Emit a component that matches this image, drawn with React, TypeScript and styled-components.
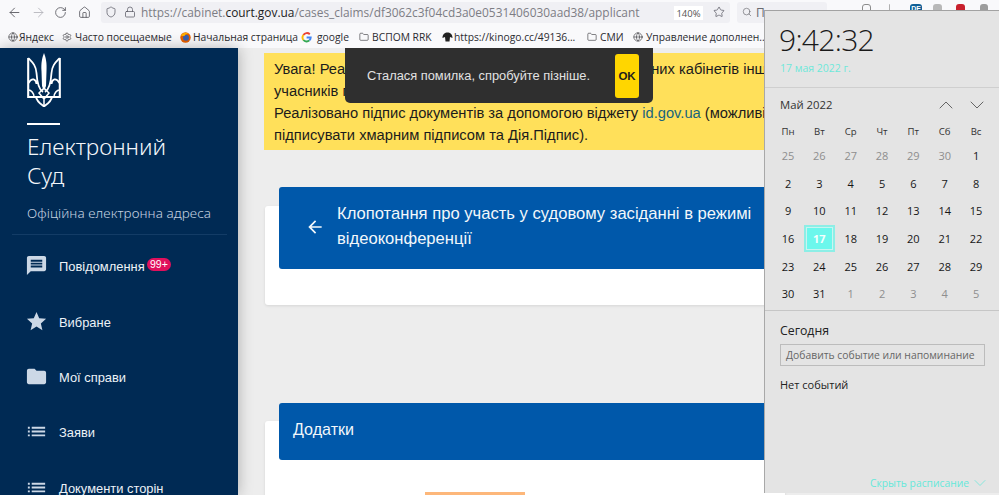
import { FunctionComponent } from 'react';
import styled, { createGlobalStyle } from 'styled-components';
import { ArrowLeft, ArrowRight, ChevronDown, ChevronUp, Folder, Globe, Home, Lock, RotateCw, Search, Settings, Shield, Star } from 'lucide-react';
import { MdArrowBack, MdFolder, MdList, MdMessage, MdStar } from 'react-icons/md';

const GlobalStyle = createGlobalStyle`
  html, body {
    margin: 0;
    padding: 0;
    overflow: hidden;
    background: #ededed;
  }
  * { box-sizing: border-box; }
`;

const Page = styled.div`
  position: relative;
  width: 999px;
  height: 495px;
  overflow: hidden;
  display: flex;
  flex-direction: column;
  font-family: "Liberation Sans", Arial, sans-serif;
`;

/* browser chrome */
const Toolbar = styled.div`
  height: 26px;
  flex: none;
  display: flex;
  align-items: center;
  padding: 0 0 2px 7px;
  background: #f9f9fb;
  color: #55555c;
`;

const NavButton = styled.span<{ $width: number; $muted?: boolean }>`
  width: ${p => p.$width}px;
  flex: none;
  display: flex;
  align-items: center;
  color: ${p => (p.$muted ? '#b4b4ba' : '#55555c')};
`;

const UrlBar = styled.div`
  width: 629px;
  height: 21px;
  flex: none;
  display: flex;
  align-items: center;
  margin: 0 7px 0 5px;
  background: #f0f0f4;
  border-radius: 3px;
`;

const UrlIcon = styled.span<{ $gap?: number }>`
  width: 19px;
  flex: none;
  display: flex;
  justify-content: center;
  margin-left: ${p => p.$gap ?? 0}px;
  color: #5b5b66;
`;

const UrlText = styled.div`
  width: 533px;
  flex: none;
  margin-left: 2px;
  font-family: "Open Sans", sans-serif;
  font-size: 11.9px;
  color: #7d7d84;
  white-space: nowrap;
  overflow: hidden;

  b {
    font-weight: 400;
    color: #1c1c22;
  }
`;

const ZoomBadge = styled.span`
  width: 29px;
  height: 14px;
  flex: none;
  margin-top: 2px;
  background: #fff;
  font-family: "Open Sans", sans-serif;
  font-size: 9.5px;
  line-height: 15px;
  text-align: center;
  color: #555;
`;

const SearchBox = styled.div`
  width: 90px;
  height: 21px;
  flex: none;
  display: flex;
  align-items: center;
  gap: 4px;
  padding-left: 5px;
  background: #f0f0f4;
  font-family: "Open Sans", sans-serif;
  font-size: 12px;
  color: #6a6a70;
  border-radius: 3px;
`;

const TrayIcon = styled.span<{ $color: string; $offset: number; $width: number; $outline?: boolean }>`
  width: ${p => p.$width}px;
  height: 16px;
  flex: none;
  margin-left: ${p => p.$offset}px;
  border-radius: 3px;
  background: ${p => (p.$outline ? 'transparent' : p.$color)};
  border: ${p => (p.$outline ? `1px solid ${p.$color}` : 'none')};
  color: #fff;
  font-size: 7px;
  font-weight: 700;
  line-height: 10px;
  text-align: center;
`;

const Bookmarks = styled.div`
  height: 22px;
  flex: none;
  display: flex;
  align-items: center;
  padding-left: 8px;
  background: #f9f9fb;
  font-family: "Open Sans", sans-serif;
  font-size: 10.3px;
  color: #2b2b30;
  white-space: nowrap;
`;

const Bookmark = styled.span<{ $width: number; $gap?: number }>`
  width: ${p => p.$width}px;
  flex: none;
  display: flex;
  align-items: center;
  gap: ${p => p.$gap ?? 2}px;
  color: #2b2b30;

  svg { flex: none; }
`;

/* page */
const Body = styled.div`
  flex: 1;
  min-height: 0;
  display: flex;
`;

const Sidebar = styled.aside`
  width: 238px;
  flex: none;
  background: #002a54;
  box-shadow: 0 0 14px rgba(0, 0, 0, 0.28);
  overflow: hidden;
  z-index: 1;
`;

const Brand = styled.div`
  margin: 0 11px 0 12px;
  padding: 5px 0 0 15px;
  height: 187px;
  border-bottom: 1px solid #133c66;
`;

const Rule = styled.div`
  width: 33px;
  height: 2px;
  margin: 12px 0 7px;
  background: #fff;
`;

const Title = styled.div`
  font-family: "Noto Sans", sans-serif;
  font-weight: 300;
  font-size: 22.6px;
  line-height: 29px;
  color: #f2f6fa;
`;

const Subtitle = styled.div`
  margin-top: 14px;
  font-family: "Noto Sans", sans-serif;
  font-weight: 300;
  font-size: 13.5px;
  letter-spacing: 0.07px;
  color: #c4d2e0;
  white-space: nowrap;
`;

const Nav = styled.nav`
  padding: 3px 0 0 25px;
`;

const NavItem = styled.div`
  height: 55.4px;
  display: flex;
  align-items: center;
  gap: 11px;
  font-size: 12.9px;
  color: #edf2f7;
  white-space: nowrap;

  svg {
    flex: none;
    color: #ccd8e6;
  }
`;

const NavLabel = styled.span`
  position: relative;
  top: 1px;
`;

const Badge = styled.span`
  position: absolute;
  left: 88px;
  top: -1px;
  height: 13px;
  padding: 0 3px;
  border-radius: 7px;
  background: #e0105c;
  color: #fff;
  font-size: 10.5px;
  line-height: 12px;
`;

const Content = styled.main`
  flex: 1;
  min-width: 0;
  overflow: hidden;
  padding: 5px 0 0 26px;
  background: #ededed;
`;

const Notice = styled.div`
  width: 520px;
  height: 97px;
  padding: 5px 0 0 10px;
  background: #ffe05a;
  font-size: 14.7px;
  line-height: 22px;
  color: #1c1c1c;
  white-space: nowrap;
  overflow: hidden;

  a {
    color: #17657e;
    text-decoration: none;
  }
`;

const Card = styled.section<{ $top: number; $height: number }>`
  width: 520px;
  height: ${p => p.$height}px;
  margin: ${p => p.$top}px 0 0 1px;
  background: #fff;
  border-radius: 3px 0 0 3px;
  box-shadow: 0 1px 3px rgba(0, 0, 0, 0.1);
`;

const CardHeader = styled.header<{ $height: number; $lift: number }>`
  height: ${p => p.$height}px;
  margin-left: 14px;
  transform: translateY(-${p => p.$lift}px);
  display: flex;
  align-items: center;
  background: #0058aa;
  border-radius: 3px 0 0 3px;
  color: #f2f7fb;
`;

const BackIcon = styled.span`
  width: 58px;
  flex: none;
  display: flex;
  justify-content: center;
  padding: 0 0 2px 14px;
`;

const HeaderTitle = styled.div`
  font-size: 16.6px;
  line-height: 25px;
  padding-bottom: 4px;
  white-space: nowrap;
`;

const PlainTitle = styled.div`
  padding: 0 0 4px 14px;
  font-size: 16.1px;
`;

const AttachButton = styled.div`
  width: 100px;
  height: 4px;
  margin: 14px 0 0 160px;
  background: #fdb77a;
`;

/* toast over the notice */
const Toast = styled.div`
  position: absolute;
  left: 345px;
  top: 48px;
  width: 308px;
  height: 55px;
  display: flex;
  align-items: center;
  justify-content: space-between;
  padding: 0 14px 0 22px;
  background: #2f2f2f;
  border-radius: 0 0 5px 5px;
  color: #e2e2e2;
  font-size: 12.85px;
  z-index: 2;
`;

const ToastButton = styled.span`
  width: 24px;
  height: 44px;
  display: flex;
  align-items: center;
  justify-content: center;
  background: #ffd600;
  border-radius: 3px;
  color: #1d1d1d;
  font-size: 11.5px;
  font-weight: 700;
`;

/* windows calendar flyout */
const Flyout = styled.div`
  position: absolute;
  left: 764px;
  top: 10px;
  width: 235px;
  height: 483px;
  background: #e4e4e4;
  border-top: 1px solid #a2a2a2;
  border-left: 1px solid #a8a8a8;
  font-family: "Open Sans", sans-serif;
  color: #111;
  z-index: 3;
`;

const ClockPanel = styled.div`
  height: 77px;
  padding: 9px 0 0 14px;
  border-bottom: 1px solid #cfcfcf;
`;

const Clock = styled.div`
  font-weight: 300;
  font-size: 30px;
  letter-spacing: -0.7px;
  line-height: 40px;
  color: #1a1a1a;
`;

const ClockDate = styled.div`
  font-size: 10.5px;
  line-height: 14px;
  margin: 1px 0 0 1px;
  color: #6ee8da;
`;

const MonthPanel = styled.div`
  height: 223px;
  border-bottom: 1px solid #c6c6c6;
`;

const MonthHead = styled.div`
  height: 33px;
  display: flex;
  align-items: center;
  padding: 0 10px 0 15px;
  font-size: 11.3px;
  color: #333;
`;

const MonthName = styled.span`
  flex: 1;
`;

const MonthArrows = styled.span`
  display: flex;
  gap: 7px;
  color: #444;
`;

const DayGrid = styled.div`
  display: grid;
  grid-template-columns: repeat(7, 31.33px);
  grid-template-rows: 21px repeat(6, 27.6px);
  padding-left: 7.4px;
`;

const WeekDay = styled.div`
  display: flex;
  align-items: center;
  justify-content: center;
  font-size: 9.6px;
  color: #333;
`;

const Day = styled.div<{ $muted?: boolean; $today?: boolean }>`
  display: flex;
  align-items: center;
  justify-content: center;
  font-size: 11px;
  color: ${p => (p.$today ? '#f4fffe' : p.$muted ? '#8e8e8e' : '#161616')};
  font-weight: ${p => (p.$today ? 700 : 400)};
  background: ${p => (p.$today ? '#6cf7ec' : 'transparent')};
  border: ${p => (p.$today ? '2px solid #8ceee6' : 'none')};
  outline: ${p => (p.$today ? '1px solid #c9f4f0' : 'none')};
  outline-offset: -3px;
`;

const Agenda = styled.div`
  padding: 12px 14px 0 15px;
`;

const AgendaTitle = styled.div`
  font-size: 12.3px;
  line-height: 16px;
  color: #222;
`;

const EventInput = styled.div`
  height: 22px;
  margin-top: 5px;
  padding-left: 5px;
  border: 1px solid #bcbcbc;
  font-size: 10.35px;
  line-height: 20px;
  color: #666;
  white-space: nowrap;
`;

const NoEvents = styled.div`
  margin-top: 11px;
  font-size: 11px;
  line-height: 15px;
  color: #222;
`;

const HideAgenda = styled.div`
  position: absolute;
  right: 9px;
  bottom: 0;
  display: flex;
  align-items: center;
  gap: 1px;
  font-size: 10.3px;
  color: #66e8da;
`;

const bookmarkIconProps = { size: 10, strokeWidth: 1.4 };

const Trident: FunctionComponent = () => (
  <svg width="34" height="54" viewBox="0 0 34 54" fill="none" stroke="#fff" strokeWidth="2.1">
    <path d="M1.2 5 V44 H32.8 V5" />
    <path d="M1.2 5 C5 9 9 12 9.5 20 C10 28 11 36 16 39 M1.5 30 C5 24 9 26 9.5 31 M32.8 5 C29 9 25 12 24.5 20 C24 28 23 36 18 39 M32.5 30 C29 24 25 26 24.5 31" strokeWidth="1.8" />
    <path d="M7 44 C7 40 4 37 1.5 37 M27 44 C27 40 30 37 32.5 37" strokeWidth="1.6" />
    <path d="M17 0 C19 5 20 10 19.5 18 L19 33 L17 38 L15 33 L14.5 18 C14 10 15 5 17 0 Z" fill="#fff" stroke="none" />
    <path d="M9 44 C10 49 14 51 17 53.5 C20 51 24 49 25 44" strokeWidth="1.8" />
    <path d="M12 40 L17 35 L22 40 L17 46 Z M17 46 V53" strokeWidth="1.5" />
  </svg>
);

const FirefoxMark: FunctionComponent = () => (
  <svg width="11" height="11" viewBox="0 0 11 11">
    <circle cx="5.5" cy="5.5" r="5.2" fill="#e66000" />
    <circle cx="6" cy="5.8" r="3" fill="#3a5fb0" />
    <path d="M1 4 C2 1 6 0 8.5 1.5 C6.5 1.5 5 2.5 4.5 4 Z" fill="#ffb000" />
  </svg>
);

const GoogleMark: FunctionComponent = () => (
  <svg width="11" height="11" viewBox="0 0 11 11" fill="none" strokeWidth="1.9">
    <path d="M8.8 2.2 A4.2 4.2 0 0 0 2.4 3" stroke="#ea4335" />
    <path d="M2.4 3 A4.2 4.2 0 0 0 2.4 8" stroke="#fbbc05" />
    <path d="M2.4 8 A4.2 4.2 0 0 0 8.4 8.4" stroke="#34a853" />
    <path d="M8.4 8.4 A4.2 4.2 0 0 0 9.7 5.5 H5.6" stroke="#4285f4" />
  </svg>
);

const KinogoMark: FunctionComponent = () => (
  <svg width="11" height="10" viewBox="0 0 11 10">
    <path d="M0.5 6 C0.5 2 3 0.5 5.5 0.5 C8 0.5 10.5 2 10.5 6 L8 5 L7.5 9.5 L3.5 9.5 L3 5 Z" fill="#222" />
  </svg>
);

const weekDays = ['Пн', 'Вт', 'Ср', 'Чт', 'Пт', 'Сб', 'Вс'];
const prevDays = [25, 26, 27, 28, 29, 30];
const monthDays = Array.from({ length: 31 }, (_, i) => i + 1);
const nextDays = [1, 2, 3, 4, 5];

export default function App() {
  return (
    <Page>
      <GlobalStyle />
      <Toolbar>
        <NavButton $width={24}><ArrowLeft size={15} strokeWidth={1.4} /></NavButton>
        <NavButton $width={23} $muted><ArrowRight size={15} strokeWidth={1.4} /></NavButton>
        <NavButton $width={24}><RotateCw size={13} strokeWidth={1.5} /></NavButton>
        <NavButton $width={18}><Home size={13} strokeWidth={1.5} /></NavButton>
        <UrlBar>
          <UrlIcon><Shield size={12} strokeWidth={1.5} /></UrlIcon>
          <UrlIcon><Lock size={12} strokeWidth={1.5} /></UrlIcon>
          <UrlText>https://cabinet.<b>court.gov.ua</b>/cases_claims/df3062c3f04cd3a0e0531406030aad38/applicant</UrlText>
          <ZoomBadge>140%</ZoomBadge>
          <UrlIcon $gap={6}><Star size={12} strokeWidth={1.5} /></UrlIcon>
        </UrlBar>
        <SearchBox><Search size={10} strokeWidth={1.6} />П</SearchBox>
        <TrayIcon $color="#8c8c8c" $width={9} $offset={35} $outline />
        <TrayIcon $color="#b0b0b0" $width={1} $offset={18} />
        <TrayIcon $color="#0f5f96" $width={12} $offset={20}>DE</TrayIcon>
        <TrayIcon $color="#b8b8b8" $width={9} $offset={11} />
        <TrayIcon $color="#c8202c" $width={9} $offset={14} />
        <TrayIcon $color="#9c9c9c" $width={8} $offset={15} />
      </Toolbar>
      <Bookmarks>
        <Bookmark $width={54} $gap={1}><Globe {...bookmarkIconProps} />Яндекс</Bookmark>
        <Bookmark $width={118} $gap={3}><Settings {...bookmarkIconProps} />Часто посещаемые</Bookmark>
        <Bookmark $width={121}><FirefoxMark />Начальная страница</Bookmark>
        <Bookmark $width={58} $gap={5}><GoogleMark />google</Bookmark>
        <Bookmark $width={83} $gap={3}><Folder {...bookmarkIconProps} />ВСПОМ RRK</Bookmark>
        <Bookmark $width={145} $gap={1}><KinogoMark />https://kinogo.cc/49136...</Bookmark>
        <Bookmark $width={46} $gap={3}><Folder {...bookmarkIconProps} />СМИ</Bookmark>
        <Bookmark $width={130} $gap={3}><Globe {...bookmarkIconProps} />Управление дополнен...</Bookmark>
      </Bookmarks>
      <Body>
        <Sidebar>
          <Brand>
            <Trident />
            <Rule />
            <Title>Електронний<br />Суд</Title>
            <Subtitle>Офіційна електронна адреса</Subtitle>
          </Brand>
          <Nav>
            <NavItem>
              <MdMessage size={23} />
              <NavLabel>Повідомлення<Badge>99+</Badge></NavLabel>
            </NavItem>
            <NavItem><MdStar size={23} /><NavLabel>Вибране</NavLabel></NavItem>
            <NavItem><MdFolder size={23} /><NavLabel>Мої справи</NavLabel></NavItem>
            <NavItem><MdList size={23} /><NavLabel>Заяви</NavLabel></NavItem>
            <NavItem><MdList size={23} /><NavLabel>Документи сторін</NavLabel></NavItem>
          </Nav>
        </Sidebar>
        <Content>
          <Notice>
            Увага! Реалізовано можливість використання Електронних кабінетів інших<br />
            учасників процесу<br />
            Реалізовано підпис документів за допомогою віджету <a>id.gov.ua</a> (можливість<br />
            підписувати хмарним підписом та Дія.Підпис).
          </Notice>
          <Card $top={56} $height={99}>
            <CardHeader $height={82} $lift={19}>
              <BackIcon><MdArrowBack size={20} /></BackIcon>
              <HeaderTitle>Клопотання про участь у судовому засіданні в режимі<br />відеоконференції</HeaderTitle>
            </CardHeader>
          </Card>
          <Card $top={116} $height={80}>
            <CardHeader $height={57} $lift={18}>
              <PlainTitle>Додатки</PlainTitle>
            </CardHeader>
            <AttachButton />
          </Card>
        </Content>
      </Body>
      <Toast>
        Сталася помилка, спробуйте пізніше.
        <ToastButton>OK</ToastButton>
      </Toast>
      <Flyout>
        <ClockPanel>
          <Clock>9:42:32</Clock>
          <ClockDate>17 мая 2022 г.</ClockDate>
        </ClockPanel>
        <MonthPanel>
          <MonthHead>
            <MonthName>Май 2022</MonthName>
            <MonthArrows>
              <ChevronUp size={24} strokeWidth={0.8} />
              <ChevronDown size={24} strokeWidth={0.8} />
            </MonthArrows>
          </MonthHead>
          <DayGrid>
            {weekDays.map(d => <WeekDay key={d}>{d}</WeekDay>)}
            {prevDays.map(d => <Day key={`p${d}`} $muted>{d}</Day>)}
            {monthDays.map(d => <Day key={d} $today={d === 17}>{d}</Day>)}
            {nextDays.map(d => <Day key={`n${d}`} $muted>{d}</Day>)}
          </DayGrid>
        </MonthPanel>
        <Agenda>
          <AgendaTitle>Сегодня</AgendaTitle>
          <EventInput>Добавить событие или напоминание</EventInput>
          <NoEvents>Нет событий</NoEvents>
        </Agenda>
        <HideAgenda>Скрыть расписание <ChevronDown size={20} strokeWidth={0.9} /></HideAgenda>
      </Flyout>
    </Page>
  );
}
